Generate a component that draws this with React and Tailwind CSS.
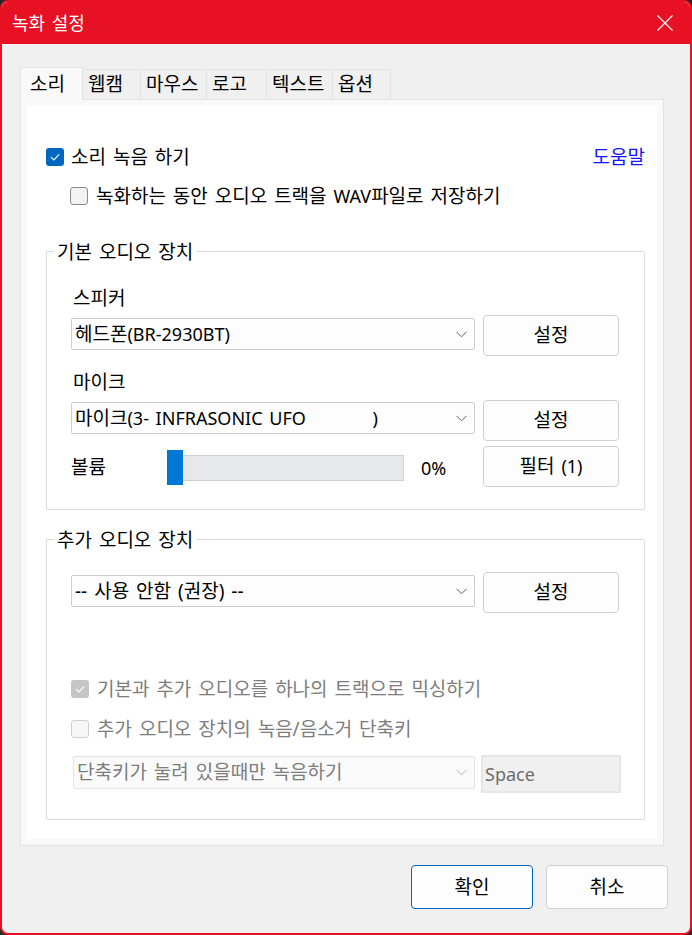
import React from "react";

const F = "font-['Noto_Sans','Noto_Sans_CJK_KR',sans-serif]";

function L({ children }) {
  return <span className="text-[18px]">{children}</span>;
}

function Chevron({ color = "#606060" }) {
  return (
    <svg width="11" height="7" viewBox="0 0 11 7" className="shrink-0">
      <path d="M0.5 0.8 L5.5 5.8 L10.5 0.8" fill="none" stroke={color} strokeWidth="1" />
    </svg>
  );
}

function Check({ color = "white" }) {
  return (
    <svg width="12" height="10" viewBox="0 0 12 10">
      <path d="M2 5.2 L4.8 8 L10.2 2.4" fill="none" stroke={color} strokeWidth="1.1" />
    </svg>
  );
}

function CheckBox({ checked, disabled }) {
  if (checked) {
    return (
      <div
        className={`flex h-[18px] w-[18px] shrink-0 items-center justify-center rounded-[3px] ${
          disabled ? "bg-[#c5c5c5]" : "bg-[#0067c0]"
        }`}
      >
        <Check />
      </div>
    );
  }
  return (
    <div
      className={`h-[18px] w-[18px] shrink-0 rounded-[3px] border ${
        disabled ? "border-[#cfcfcf] bg-[#f7f7f7]" : "border-[#8a8a8a] bg-[#f3f3f3]"
      }`}
    />
  );
}

function Select({ children, disabled, className = "" }) {
  return (
    <div
      className={`flex h-[32px] items-center justify-between rounded-[2px] border pl-[3px] pr-[7px] ${
        disabled ? "border-[#e3e3e3] bg-[#fafafa] text-[#7d7d7d]" : "border-[#cccccc] bg-[#fdfdfd] text-black"
      } ${className}`}
    >
      <span className="whitespace-pre leading-none">{children}</span>
      <Chevron color={disabled ? "#b8b8b8" : "#606060"} />
    </div>
  );
}

function Button({ children, className = "", primary }) {
  return (
    <div
      className={`flex items-center justify-center rounded-[4px] border bg-[#fdfdfd] text-black ${
        primary ? "border-[#0067c0]" : "border-[#d0d0d0]"
      } ${className}`}
    >
      {children}
    </div>
  );
}

function Group({ title, className = "", children }) {
  return (
    <div className={`relative rounded-[1px] border border-[#dcdcdc] ${className}`}>
      <div className="absolute left-[7px] top-0 -translate-y-1/2 bg-white px-[3px] leading-[24px]">
        {title}
      </div>
      {children}
    </div>
  );
}

export default function App() {
  const tabs = ["소리", "웹캠", "마우스", "로고", "텍스트", "옵션"];
  const tabW = ["w-[63px]", "w-[59px]", "w-[67px]", "w-[61px]", "w-[67px]", "w-[59px]"];
  return (
    <div className={`h-[935px] w-[692px] bg-[#1d2b2b] ${F} text-[19px] text-black [word-spacing:2px]`}>
      <div className="flex h-full flex-col overflow-hidden rounded-[8px] border-2 border-[#e81123] bg-[#f0f0f0]">
        {/* Title bar */}
        <div className="flex h-[42px] shrink-0 items-center justify-between bg-[#e81123] pl-[10px] pr-[17px] text-white">
          <span className="text-[18px] leading-none">녹화 설정</span>
          <svg width="16" height="16" viewBox="0 0 16 16">
            <path d="M0.5 0.5 L15.5 15.5 M15.5 0.5 L0.5 15.5" stroke="white" strokeWidth="1.2" />
          </svg>
        </div>

        {/* Body */}
        <div className="flex flex-1 flex-col pl-[18px] pt-[23px]">
          {/* Tabs */}
          <div className="flex h-[32px] items-end">
            {tabs.map((t, i) =>
              i === 0 ? (
                <div
                  key={t}
                  className={`relative z-10 -mb-px flex h-[33px] items-center border border-b-0 border-[#e3e3e3] bg-[#f9f9f9] pl-[9px] ${tabW[i]}`}
                >
                  {t}
                </div>
              ) : (
                <div
                  key={t}
                  className={`-ml-px flex h-[30px] items-center border border-b-0 border-[#e3e3e3] bg-[#f0f0f0] pl-[5px] ${tabW[i]}`}
                >
                  {t}
                </div>
              )
            )}
          </div>

          {/* Panel */}
          <div className="h-[747px] w-[644px] border border-[#e3e3e3] bg-[#f9f9f9] p-[6px]">
            <div className="h-full bg-white pl-[19px] pr-[12px] pt-[39px]">
              {/* row 1 */}
              <div className="flex h-[24px] items-center justify-between">
                <div className="flex items-center gap-[7px]">
                  <CheckBox checked />
                  <span>소리 녹음 하기</span>
                </div>
                <span className="text-[#1414ff]">도움말</span>
              </div>
              {/* row 2 */}
              <div className="ml-[24px] mt-[15px] flex h-[24px] items-center gap-[8px]">
                <CheckBox />
                <span>
                  녹화하는 동안 오디오 트랙을 <L>WAV</L>파일로 저장하기
                </span>
              </div>

              {/* Group 1 */}
              <Group title="기본 오디오 장치" className="mt-[43px] h-[259px] w-[599px]">
                <div className="pl-[24px] pt-[34px]">
                  <div className="ml-[2px] h-[24px] leading-[24px]">스피커</div>
                  <div className="mt-[5px] flex items-start">
                    <Select className="mt-[3px] w-[404px]">
                      헤드폰<L>(BR-2930BT)</L>
                    </Select>
                    <Button className="ml-[8px] h-[41px] w-[136px]">설정</Button>
                  </div>
                  <div className="ml-[2px] mt-[14px] h-[24px] leading-[24px]">마이크</div>
                  <div className="mt-[6px] flex items-start">
                    <Select className="mt-[2px] w-[404px]">
                      마이크<L>{"(3- INFRASONIC UFO          )"}</L>
                    </Select>
                    <Button className="ml-[8px] h-[41px] w-[136px]">설정</Button>
                  </div>
                  <div className="mt-[5px] flex items-start">
                    <div className="flex h-[41px] w-[404px] items-center">
                      <span className="w-[96px] shrink-0 leading-[24px]">볼륨</span>
                      <div className="relative mt-[2px] h-[26px] w-[237px] border border-[#d0d0d0] bg-[#e6e8e9]">
                        <div className="absolute left-[-1px] top-[-6px] h-[35px] w-[16px] bg-[#0078d7]" />
                      </div>
                      <span className="ml-[17px] mt-[2px] text-[18px] leading-[24px]">0%</span>
                    </div>
                    <Button className="ml-[8px] h-[41px] w-[136px]">
                      <span>
                        필터 <L>(1)</L>
                      </span>
                    </Button>
                  </div>
                </div>
              </Group>

              {/* Group 2 */}
              <Group title="추가 오디오 장치" className="mt-[29px] h-[281px] w-[599px]">
                <div className="pl-[24px] pt-[32px]">
                  <div className="flex items-start">
                    <Select className="mt-[3px] w-[404px]">-- 사용 안함 (권장) --</Select>
                    <Button className="ml-[8px] h-[41px] w-[136px]">설정</Button>
                  </div>
                  <div className="mt-[64px] flex h-[24px] items-center gap-[8px] text-[#7d7d7d]">
                    <CheckBox checked disabled />
                    <span>기본과 추가 오디오를 하나의 트랙으로 믹싱하기</span>
                  </div>
                  <div className="mt-[16px] flex h-[24px] items-center gap-[8px] text-[#7d7d7d]">
                    <CheckBox disabled />
                    <span>추가 오디오 장치의 녹음/음소거 단축키</span>
                  </div>
                  <div className="mt-[14px] flex items-start">
                    <Select disabled className="ml-[2px] mt-[1px] h-[33px] w-[402px]">
                      단축키가 눌려 있을때만 녹음하기
                    </Select>
                    <div className="ml-[6px] flex h-[38px] w-[140px] items-center border-2 border-[#e6e6e6] bg-[#f0f0f0] pl-[2px] text-[18px] text-[#6d6d6d]">
                      Space
                    </div>
                  </div>
                </div>
              </Group>
            </div>
          </div>

          {/* Footer buttons */}
          <div className="mt-[19px] flex justify-end gap-[13px] pr-[22px]">
            <Button primary className="h-[44px] w-[122px]">확인</Button>
            <Button className="h-[44px] w-[122px]">취소</Button>
          </div>
        </div>
      </div>
    </div>
  );
}
